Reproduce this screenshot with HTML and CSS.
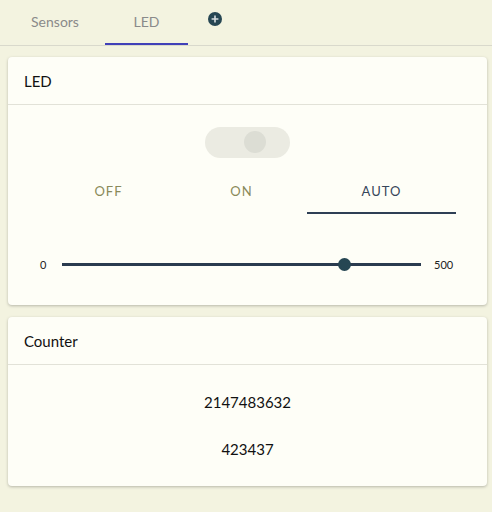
FILE: index.html
```html
<!DOCTYPE html>
<html>
<head>
<meta charset="utf-8">
<link rel="stylesheet" href="styles.css">
</head>
<body>
<nav class="tabs">
  <div class="tab">Sensors</div>
  <div class="tab active">LED</div>
  <div class="tab-add">
    <svg width="14" height="14" viewBox="0 0 14 14"><circle cx="7" cy="7" r="7" fill="#264653"/><path d="M7 3.6v6.8M3.6 7h6.8" stroke="#d8dde0" stroke-width="1.6"/></svg>
  </div>
</nav>
<main class="content">
  <section class="card">
    <header class="card-head">LED</header>
    <div class="card-body led-body">
      <div class="toggle"><span class="knob"></span></div>
      <div class="modes">
        <div class="mode m-off">OFF</div>
        <div class="mode m-on">ON</div>
        <div class="mode m-auto active">AUTO</div>
      </div>
      <div class="slider">
        <span class="lbl">0</span>
        <div class="track"><span class="thumb"></span></div>
        <span class="lbl">500</span>
      </div>
    </div>
  </section>
  <section class="card">
    <header class="card-head">Counter</header>
    <div class="card-body counter-body">
      <div class="num">2147483632</div>
      <div class="num">423437</div>
    </div>
  </section>
</main>
</body>
</html>
```
FILE: styles.css
```css
* { box-sizing: border-box; }
html, body { margin: 0; padding: 0; }
body {
  width: 492px;
  height: 512px;
  overflow: hidden;
  background: #f3f3e0;
  font-family: Lato, "Open Sans", sans-serif;
  color: #111;
}
.tabs {
  height: 46px;
  display: flex;
  align-items: stretch;
  border-bottom: 1px solid #d9d9cc;
  padding-left: 23px;
}
.tab {
  display: flex;
  align-items: center;
  justify-content: center;
  font-size: 14px;
  color: #8a8a8a;
  padding-bottom: 2px;
}
.tab:first-child { width: 64px; }
.tab.active {
  width: 83px;
  margin-left: 18px;
  border-bottom: 2px solid #4040b8;
  padding-bottom: 0;
}
.tab-add {
  display: flex;
  align-items: flex-start;
  padding-top: 12px;
  margin-left: 20px;
}
.content {
  padding: 11px 5px 0 8px;
  display: flex;
  flex-direction: column;
  gap: 12px;
}
.card {
  background: #fefef7;
  border-radius: 4px;
  box-shadow: 0 1px 3px rgba(0,0,0,0.25);
}
.card-head {
  height: 48px;
  padding: 15px 0 0 16px;
  font-size: 15px;
  color: #111;
  border-bottom: 1px solid #e2e2d8;
}
.led-body {
  padding: 22px 0 0 0;
  height: 200px;
}
.toggle {
  margin: 0 auto 0 197px;
  width: 85px;
  height: 31px;
  border-radius: 16px;
  background: #ebebe2;
  position: relative;
}
.knob {
  position: absolute;
  left: 39px;
  top: 4px;
  width: 22px;
  height: 22px;
  border-radius: 50%;
  background: #dcddd4;
}
.modes {
  display: flex;
  margin: 20px 0 0 26px;
  width: 422px;
}
.mode {
  height: 36px;
  display: flex;
  align-items: center;
  justify-content: center;
  font-size: 13px;
  letter-spacing: 1px;
  color: #8a8a5a;
  padding-bottom: 10px;
}
.m-off { width: 149px; }
.m-on { width: 124px; padding-right: 7px; }
.m-auto { width: 149px; }
.mode.active {
  color: #36465a;
  border-bottom: 2px solid #2e3f55;
  padding-bottom: 8px;
}
.slider {
  display: flex;
  align-items: center;
  margin-top: 44px;
  padding-left: 32px;
  font-size: 11px;
  color: #222;
}
.slider .lbl:first-child { width: 22px; }
.track {
  width: 359px;
  height: 3px;
  background: #2a3b4f;
  position: relative;
  margin-right: 13px;
}
.thumb {
  position: absolute;
  left: 276px;
  top: -5px;
  width: 13px;
  height: 13px;
  border-radius: 50%;
  background: #264653;
}
.counter-body {
  height: 121px;
  display: flex;
  flex-direction: column;
  align-items: center;
  padding-top: 28px;
  gap: 28px;
}
.num {
  font-size: 15px;
  color: #111;
  line-height: 19px;
}
```
